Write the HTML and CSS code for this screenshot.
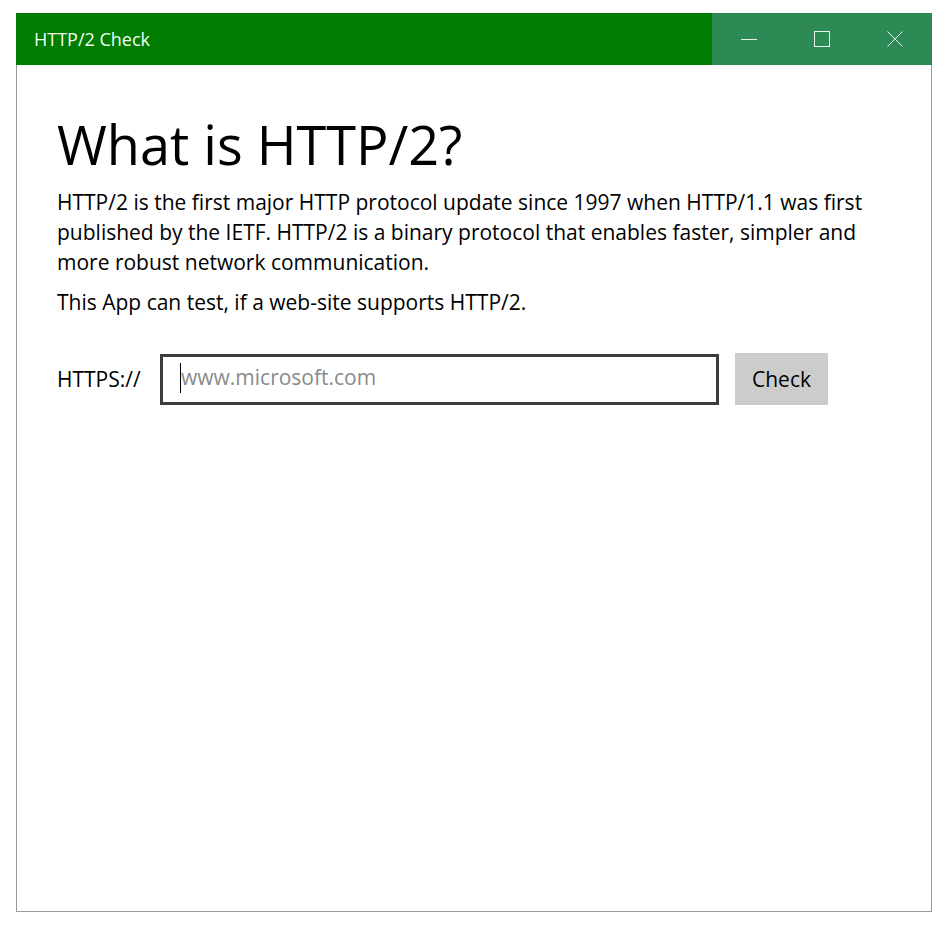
FILE: index.html
```html
<!DOCTYPE html>
<html lang="en">
<head>
  <meta charset="UTF-8">
  <title>HTTP/2 Check</title>
  <link rel="stylesheet" href="styles.css">
</head>
<body>

  <div class="window">
    <div class="titlebar">
      <span class="title">HTTP/2 Check</span>
      <div class="controls">
        <span class="ctl">
          <svg width="16" height="16" viewBox="0 0 16 16"><line x1="0" y1="8.5" x2="16" y2="8.5" stroke="#e8f2ec" stroke-width="1"/></svg>
        </span>
        <span class="ctl">
          <svg width="16" height="16" viewBox="0 0 16 16"><rect x="0.5" y="0.5" width="15" height="15" fill="none" stroke="#e8f2ec" stroke-width="1"/></svg>
        </span>
        <span class="ctl">
          <svg width="16" height="16" viewBox="0 0 16 16"><path d="M0.5 0.5 L15.5 15.5 M15.5 0.5 L0.5 15.5" stroke="#e8f2ec" stroke-width="1"/></svg>
        </span>
      </div>
    </div>

    <div class="content">
      <h1>What is HTTP/2?</h1>
      <p>HTTP/2 is the first major HTTP protocol update since 1997 when HTTP/1.1 was first published by the IETF. HTTP/2 is a binary protocol that enables faster, simpler and more robust network communication.</p>
      <p>This App can test, if a web-site supports HTTP/2.</p>

      <div class="check-row">
        <label for="url">HTTPS://</label>
        <div class="url-box">
          <span class="caret"></span>
          <input type="text" id="url" placeholder="www.microsoft.com">
        </div>
        <button class="btn">Check</button>
      </div>
    </div>
  </div>

</body>
</html>
```

FILE: styles.css
```css
body {
  margin: 0;
  background-color: #fff;
  font-family: "Open Sans", "Noto Sans", sans-serif;
  color: #000;
}
.window {
  margin: 13px 0 0 16px;
  width: 916px;
  height: 899px;
  box-sizing: border-box;
  border: 1px solid #9a9a9a;
  border-top: none;
  display: flex;
  flex-direction: column;
}
.titlebar {
  height: 52px;
  background-color: #007c00;
  display: flex;
  align-items: center;
  justify-content: space-between;
  margin: 0 -1px;
}
.title {
  color: #f2fff2;
  font-size: 18px;
  padding-left: 18px;
}
.controls {
  display: flex;
  height: 100%;
  width: 220px;
  background-color: #2e8a55;
}
.ctl {
  flex: 1;
  display: flex;
  align-items: center;
  justify-content: center;
}
.content {
  padding: 47px 40px 0 40px;
}
h1 {
  font-size: 54px;
  line-height: 64px;
  font-weight: 400;
  margin: 0 0 11px 0;
}
p {
  font-size: 21px;
  line-height: 30px;
  margin: 0 0 10px 0;
}
.check-row {
  display: flex;
  align-items: center;
  margin-top: 36px;
}
.check-row label {
  font-size: 21px;
  width: 103px;
}
.url-box {
  position: relative;
  width: 559px;
  height: 51px;
  box-sizing: border-box;
  border: 3px solid #3c3c3c;
}
.url-box input {
  width: 100%;
  height: 100%;
  box-sizing: border-box;
  border: none;
  outline: none;
  padding: 0 0 4px 18px;
  font-family: "Open Sans", "Noto Sans", sans-serif;
  font-size: 21px;
}
.url-box input::placeholder {
  color: #8a8a8a;
}
.caret {
  position: absolute;
  left: 17px;
  top: 6px;
  width: 1px;
  height: 30px;
  background-color: #000;
}
.btn {
  margin-left: 16px;
  width: 93px;
  height: 52px;
  border: none;
  background-color: #cccccc;
  font-family: "Open Sans", "Noto Sans", sans-serif;
  font-size: 21px;
  color: #000;
  padding: 0;
}
```
